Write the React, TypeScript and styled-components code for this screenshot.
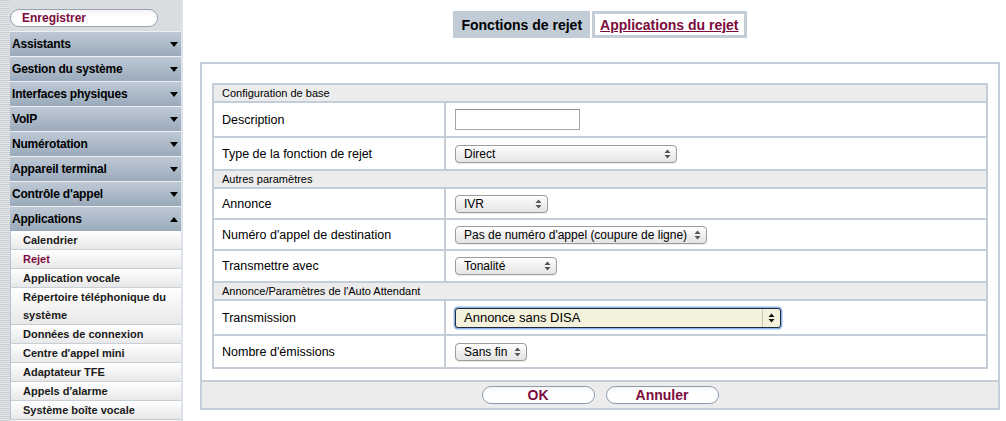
import styled, { createGlobalStyle } from 'styled-components'

const GlobalStyle = createGlobalStyle`
  html, body {
    margin: 0;
    padding: 0;
    background: #fff;
    font-family: "Liberation Sans", Arial, sans-serif;
    color: #000;
  }
`

const MAROON = '#7b0b3d'
const STEEL = '#c4ced9'

const menuGroups = [
  'Assistants',
  'Gestion du système',
  'Interfaces physiques',
  'VoIP',
  'Numérotation',
  'Appareil terminal',
  "Contrôle d'appel",
]

const subItems = [
  { label: 'Calendrier' },
  { label: 'Rejet', active: true },
  { label: 'Application vocale' },
  { label: 'Répertoire téléphonique du système' },
  { label: 'Données de connexion' },
  { label: "Centre d'appel mini" },
  { label: 'Adaptateur TFE' },
  { label: "Appels d'alarme" },
  { label: 'Système boîte vocale' },
]

const Arrow = ({ up }: { up?: boolean }) => (
  <svg width="8" height="5" viewBox="0 0 8 5">
    {up ? <polygon points="0,5 8,5 4,0" fill="#000" /> : <polygon points="0,0 8,0 4,5" fill="#000" />}
  </svg>
)

const SelectArrows = ({ dark }: { dark?: boolean }) => (
  <svg width="7" height="10" viewBox="0 0 7 10">
    <polygon points="0.5,4 6.5,4 3.5,0.5" fill={dark ? '#111' : '#555'} />
    <polygon points="0.5,6 6.5,6 3.5,9.5" fill={dark ? '#111' : '#555'} />
  </svg>
)

interface SelectProps {
  value: string
  width: number
  focused?: boolean
}

const Select = ({ value, width, focused }: SelectProps) => (
  <SelectBox $width={width} $focused={focused}>
    <span className="value">{value}</span>
    <span className="arrows">
      <SelectArrows dark={focused} />
    </span>
  </SelectBox>
)

const App = () => {
  return (
    <>
      <GlobalStyle />
      <Page>
        <Sidebar>
          <Stripe />
          <Menu>
            <SaveArea>
              <SaveButton>Enregistrer</SaveButton>
            </SaveArea>
            {menuGroups.map((g) => (
              <GroupHeader key={g}>
                <span>{g}</span>
                <Arrow />
              </GroupHeader>
            ))}
            <GroupHeader>
              <span>Applications</span>
              <Arrow up />
            </GroupHeader>
            {subItems.map((s) => (
              <SubItem key={s.label} $active={s.active}>
                {s.label}
              </SubItem>
            ))}
          </Menu>
        </Sidebar>

        <Main>
          <Tabs>
            <Tab $active>Fonctions de rejet</Tab>
            <Tab>
              <a href="#">Applications du rejet</a>
            </Tab>
          </Tabs>

          <Panel>
            <PanelBody>
              <FormTable>
                <tbody>
                  <SectionRow>
                    <td colSpan={2}>Configuration de base</td>
                  </SectionRow>
                  <DataRow $h={33}>
                    <td>Description</td>
                    <td>
                      <TextInput type="text" />
                    </td>
                  </DataRow>
                  <DataRow $h={31}>
                    <td>Type de la fonction de rejet</td>
                    <td>
                      <Select value="Direct" width={222} />
                    </td>
                  </DataRow>
                  <SectionRow>
                    <td colSpan={2}>Autres paramètres</td>
                  </SectionRow>
                  <DataRow $h={29}>
                    <td>Annonce</td>
                    <td>
                      <Select value="IVR" width={93} />
                    </td>
                  </DataRow>
                  <DataRow $h={29}>
                    <td>Numéro d'appel de destination</td>
                    <td>
                      <Select value="Pas de numéro d'appel (coupure de ligne)" width={252} />
                    </td>
                  </DataRow>
                  <DataRow $h={30}>
                    <td>Transmettre avec</td>
                    <td>
                      <Select value="Tonalité" width={102} />
                    </td>
                  </DataRow>
                  <SectionRow>
                    <td colSpan={2}>Annonce/Paramètres de l'Auto Attendant</td>
                  </SectionRow>
                  <DataRow $h={33}>
                    <td>Transmission</td>
                    <td>
                      <Select value="Annonce sans DISA" width={326} focused />
                    </td>
                  </DataRow>
                  <DataRow $h={31}>
                    <td>Nombre d'émissions</td>
                    <td>
                      <Select value="Sans fin" width={72} />
                    </td>
                  </DataRow>
                </tbody>
              </FormTable>
            </PanelBody>
            <Footer>
              <PillButton>OK</PillButton>
              <PillButton>Annuler</PillButton>
            </Footer>
          </Panel>
        </Main>
      </Page>
    </>
  )
}

export default App

const Page = styled.div`
  display: flex;
  width: 1006px;
  height: 421px;
  overflow: hidden;
`

const Sidebar = styled.div`
  display: flex;
  width: 183px;
  flex-shrink: 0;
  border-right: 2px solid #dde3ea;
  box-sizing: border-box;
`

const Stripe = styled.div`
  width: 10px;
  flex-shrink: 0;
  background: repeating-linear-gradient(to bottom, #c9cdd2 0px, #c9cdd2 1px, #e6e8eb 1px, #e6e8eb 2px);
`

const Menu = styled.div`
  flex: 1;
  display: flex;
  flex-direction: column;
  background: #f2f2f2;
`

const SaveArea = styled.div`
  height: 31px;
  background: #d9dde2;
  padding-top: 9px;
  box-sizing: border-box;
`

const SaveButton = styled.div`
  width: 148px;
  height: 18px;
  box-sizing: border-box;
  border: 1px solid #9aa3ad;
  border-radius: 9px;
  background: linear-gradient(#f4f4f4, #ffffff 40%);
  color: ${MAROON};
  font-weight: 700;
  font-size: 12px;
  line-height: 16px;
  padding-left: 11px;
`

const GroupHeader = styled.div`
  display: flex;
  align-items: center;
  justify-content: space-between;
  height: 25px;
  box-sizing: border-box;
  padding: 0 3px 0 2px;
  border-top: 1px solid #eef1f4;
  background: linear-gradient(#bfc9d5, #9aaabb);
  font-weight: 700;
  font-size: 12px;
  letter-spacing: -0.2px;
  color: #000;
`

const SubItem = styled.div<{ $active?: boolean }>`
  box-sizing: border-box;
  min-height: 19px;
  padding: 0 4px 0 12px;
  border-left: 1px solid #b8c2cd;
  border-bottom: 1px solid #c8cfd7;
  background: linear-gradient(#ffffff, #e8e8e8);
  font-weight: 700;
  font-size: 11px;
  line-height: 18px;
  color: ${(p) => (p.$active ? MAROON : '#1a1a1a')};
`

const Main = styled.div`
  flex: 1;
  padding: 11px 6px 0 17px;
  display: flex;
  flex-direction: column;
`

const Tabs = styled.div`
  display: flex;
  justify-content: center;
  gap: 2px;
  height: 27px;
  margin-bottom: 24px;
`

const Tab = styled.div<{ $active?: boolean }>`
  display: flex;
  align-items: center;
  padding: 0 5px;
  box-sizing: border-box;
  font-size: 14px;
  font-weight: 700;
  background: ${(p) => (p.$active ? '#c1ccd7' : '#fff')};
  border: 3px solid ${(p) => (p.$active ? '#c1ccd7' : STEEL)};

  a {
    color: ${MAROON};
    text-decoration: underline;
  }
`

const Panel = styled.div`
  border: 2px solid ${STEEL};
  width: 800px;
  box-sizing: border-box;
  background: #fff;
`

const PanelBody = styled.div`
  padding: 19px 10px 11px 10px;
`

const FormTable = styled.table`
  width: 100%;
  border-collapse: collapse;
  border: 2px solid ${STEEL};

  td {
    border: 2px solid ${STEEL};
    padding: 0;
  }
`

const SectionRow = styled.tr`
  td {
    height: 16px;
    background: #ececec;
    font-size: 11px;
    padding-left: 8px;
    line-height: 14px;
  }
`

const DataRow = styled.tr<{ $h: number }>`
  td {
    height: ${(p) => p.$h}px;
    font-size: 12.5px;
    vertical-align: middle;
  }
  td:first-child {
    width: 222px;
    padding-left: 8px;
  }
  td:last-child {
    padding-left: 9px;
  }
`

const TextInput = styled.input`
  display: block;
  width: 125px;
  height: 21px;
  box-sizing: border-box;
  border: 1px solid #a6a6a6;
  border-top-color: #8c8c8c;
  background: #fff;
  outline: none;
`

const SelectBox = styled.div<{ $width: number; $focused?: boolean }>`
  position: relative;
  display: flex;
  align-items: center;
  width: ${(p) => p.$width}px;
  height: ${(p) => (p.$focused ? 20 : 18)}px;
  box-sizing: border-box;
  border: 1px solid ${(p) => (p.$focused ? '#1f2a3a' : '#9c9c9c')};
  border-radius: ${(p) => (p.$focused ? 3 : 4)}px;
  background: ${(p) => (p.$focused ? '#f4f2dc' : 'linear-gradient(#ffffff, #f0f0f0 50%, #e4e4e4)')};
  box-shadow: ${(p) => (p.$focused ? '0 0 0 1.5px #8fb4e8' : '0 1px 0 rgba(0,0,0,0.08)')};
  font-size: ${(p) => (p.$focused ? 13 : 12)}px;
  padding-left: 8px;
  cursor: default;

  .value {
    flex: 1;
    white-space: nowrap;
  }
  .arrows {
    display: flex;
    align-items: center;
    justify-content: center;
    height: 100%;
    width: ${(p) => (p.$focused ? 17 : 18)}px;
    border-left: ${(p) => (p.$focused ? '1px solid #c9c7b5' : 'none')};
  }
`

const Footer = styled.div`
  display: flex;
  justify-content: center;
  gap: 11px;
  border-top: 2px solid ${STEEL};
  background: #ececec;
  padding: 4px 0 4px;
`

const PillButton = styled.button`
  width: 113px;
  height: 18px;
  box-sizing: border-box;
  border: 1px solid #8d9cad;
  border-radius: 9px;
  background: linear-gradient(#f6f6f6, #ffffff 40%);
  color: ${MAROON};
  font-family: "Liberation Sans", Arial, sans-serif;
  font-weight: 700;
  font-size: 14px;
  line-height: 16px;
  padding: 0;
  cursor: pointer;
`
